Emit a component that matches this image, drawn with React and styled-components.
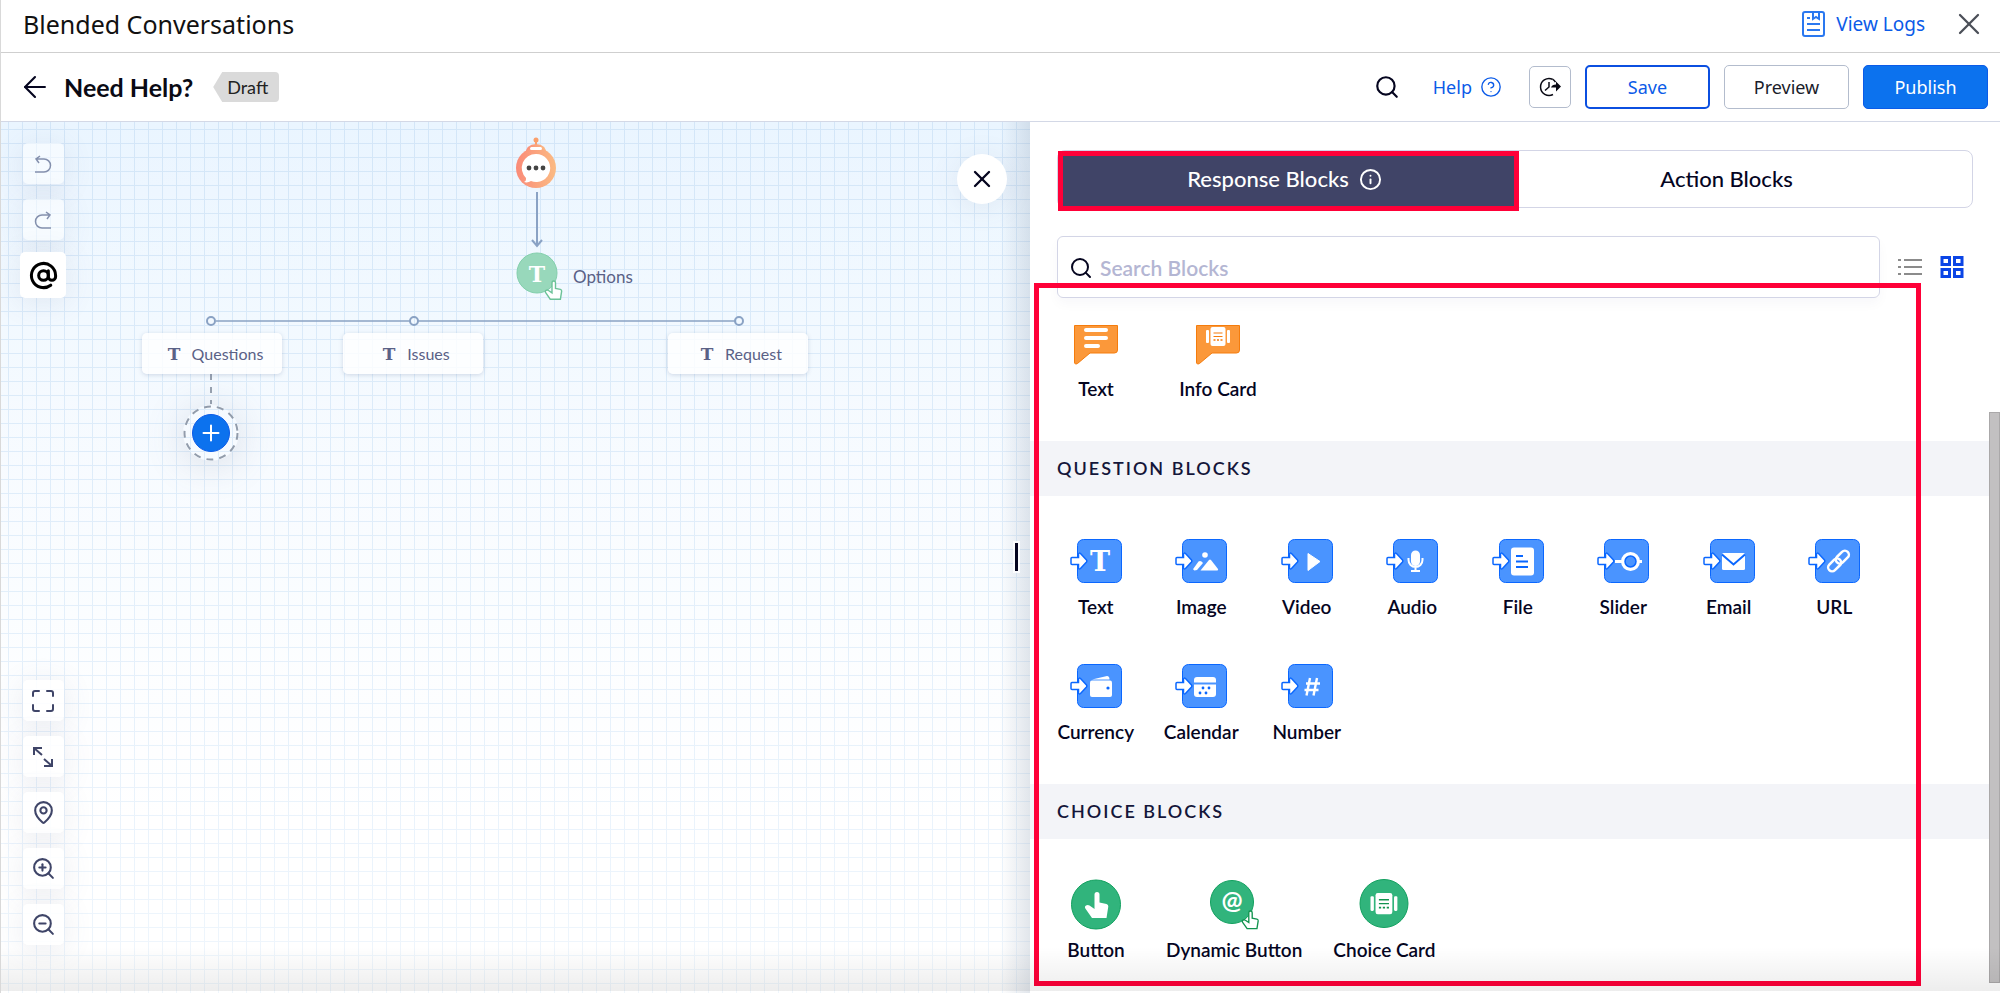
import React, { useState } from "react";
import styled, { createGlobalStyle, css } from "styled-components";
import {
  ArrowLeft,
  AtSign,
  CircleHelp,
  Info,
  MapPin,
  Search,
  X,
  ZoomIn,
  ZoomOut,
} from "lucide-react";

const GlobalStyle = createGlobalStyle`
  * {
    box-sizing: border-box;
  }
  body {
    margin: 0;
    background: #fff;
    color: #05051f;
    font-family: Lato, "Open Sans", sans-serif;
  }
  button, input {
    font-family: inherit;
    color: inherit;
  }
  svg {
    display: block;
    flex-shrink: 0;
    overflow: visible;
  }
`;

const Page = styled.div`
  position: relative;
  display: flex;
  flex-direction: column;
  height: 100vh;
  overflow: hidden;
  border-left: 1px solid #d9d9d9;
`;

// soft shade at the bottom of the window
const BottomShade = styled.div`
  position: absolute;
  left: 0;
  right: 0;
  bottom: 2px;
  height: 44px;
  background: linear-gradient(rgba(0, 0, 0, 0), rgba(0, 0, 0, 0.07));
  pointer-events: none;
`;

const plainButton = css`
  display: flex;
  align-items: center;
  justify-content: center;
  padding: 0;
  border: none;
  background: none;
  cursor: pointer;
`;

const IconButton = styled.button`
  ${plainButton};
`;

/* ---------- headers ---------- */

const TopBar = styled.header`
  display: flex;
  align-items: center;
  justify-content: space-between;
  height: 53px;
  padding: 0 13px 4px 22px;
  border-bottom: 1px solid #cfcfcf;
  font-family: "Noto Sans", sans-serif;
`;

const AppTitle = styled.h1`
  margin: 0;
  font-size: 25px;
  font-weight: 400;
  line-height: 32px;
  color: #111;
`;

const TopActions = styled.div`
  display: flex;
  align-items: center;
  gap: 26px;
  color: #4b4f58;
`;

const LogsLink = styled.a`
  display: flex;
  align-items: center;
  gap: 11px;
  color: #0b5be8;
  font-size: 19px;
  line-height: 24px;
  text-decoration: none;
`;

const FlowBar = styled.div`
  display: flex;
  align-items: center;
  justify-content: space-between;
  height: 69px;
  padding: 0 12px 0 17px;
  border-bottom: 1px solid #d3d8e6;
`;

const FlowName = styled.div`
  display: flex;
  align-items: center;
  gap: 12px;
`;

const FlowTitle = styled.h2`
  margin: 0;
  font-size: 25px;
  font-weight: 700;
  line-height: 32px;
  color: #0a0a14;
`;

const Badge = styled.span`
  margin-left: 8px;
  padding: 3px 11px 3px 14px;
  border-radius: 4px;
  background: #dadada;
  clip-path: polygon(0 50%, 9px 0, 100% 0, 100% 100%, 9px 100%);
  color: #222;
  font-size: 18px;
  line-height: 24px;
`;

const FlowActions = styled.div`
  display: flex;
  align-items: center;
  gap: 14px;
  font-family: "Noto Sans", sans-serif;
`;

const HelpLink = styled.a`
  display: flex;
  align-items: center;
  gap: 8px;
  margin: 0 13px 0 19px;
  color: #0b5be8;
  font-size: 18px;
  line-height: 24px;
  text-decoration: none;
`;

const variants = {
  outline: css`
    border: 2px solid #0b4fe0;
    color: #0b5be8;
  `,
  neutral: css`
    border: 1px solid #b3bccd;
    color: #1a1d2b;
  `,
  primary: css`
    border: 1px solid #0b5be8;
    background: #0c72ee;
    color: #fff;
  `,
};

const Button = styled.button`
  ${plainButton};
  width: ${({ $square }) => ($square ? "42px" : "125px")};
  height: ${({ $square }) => ($square ? "42px" : "44px")};
  border-radius: 5px;
  font-size: 18px;
  line-height: 24px;
  ${({ $variant }) => variants[$variant]};
`;

/* ---------- canvas ---------- */

const Body = styled.main`
  display: grid;
  grid-template-columns: 1029fr 970fr;
  grid-template-rows: minmax(0, 1fr);
  flex: 1;
  min-height: 0;
`;

const Canvas = styled.section`
  position: relative;
  overflow: hidden;
  background-color: #fff;
  background-image: linear-gradient(
      to left,
      rgba(120, 140, 165, 0.22),
      rgba(120, 140, 165, 0) 30px
    ),
    linear-gradient(rgba(255, 255, 255, 0), rgba(255, 255, 255, 0.65)),
    linear-gradient(to right, #d3e6f8 1px, transparent 1px),
    linear-gradient(#d3e6f8 1px, transparent 1px),
    linear-gradient(#eaf5ff, #fff 80%);
  background-size: auto, auto, 14px 14px, 14px 14px, auto;
  background-position: 0 0, 0 0, 7px 0, 0 7px, 0 0;
`;

const Toolbar = styled.div`
  display: flex;
  flex-direction: column;
  justify-content: space-between;
  width: 84px;
  height: 100%;
  padding: 21px 0 48px;
`;

const ToolGroup = styled.div`
  display: flex;
  flex-direction: column;
  align-items: center;
  gap: 15px;
`;

const Tool = styled.button`
  ${plainButton};
  width: 41px;
  height: 41px;
  border-radius: 5px;
  background: rgba(255, 255, 255, 0.85);
  box-shadow: 0 4px 30px rgba(90, 100, 130, 0.12);
  color: #3f4568;
  &:disabled {
    background: rgba(255, 255, 255, 0.5);
    color: #8490ad;
  }
  ${({ $active }) =>
    $active &&
    css`
      width: 46px;
      height: 46px;
      margin: -3px 0;
      background: #fff;
      color: #000;
    `}
`;

const Node = styled.div`
  position: absolute;
  left: ${({ $x }) => $x}px;
  top: ${({ $y }) => $y}px;
  display: flex;
  align-items: center;
  gap: 15px;
  color: #5a6186;
  font-size: 17px;
  line-height: 24px;
`;

const NodeLabel = styled.span`
  padding-top: 8px;
`;

const OptionNode = styled(Node)`
  justify-content: center;
  gap: 12px;
  width: 140px;
  height: 41px;
  padding-left: 6px;
  border-radius: 5px;
  background: rgba(255, 255, 255, 0.8);
  box-shadow: 0 1px 4px rgba(90, 110, 150, 0.25);
  font-size: 16px;
`;

const AddButton = styled(Node).attrs({ as: "button" })`
  ${plainButton};
  border-radius: 50%;
  box-shadow: 0 4px 40px rgba(90, 100, 130, 0.2);
`;

const CloseCanvas = styled.button`
  ${plainButton};
  position: absolute;
  top: 32px;
  right: 23px;
  width: 50px;
  height: 50px;
  border-radius: 50%;
  background: #fff;
  color: #05051f;
  box-shadow: 0 4px 30px rgba(90, 100, 130, 0.1);
`;

const DragHandle = styled.span`
  position: absolute;
  top: 421px;
  right: 12px;
  width: 3px;
  height: 28px;
  background: #05051f;
  box-shadow: 0 0 0 2px rgba(255, 255, 255, 0.8);
`;

/* ---------- blocks panel ---------- */

const Panel = styled.aside`
  position: relative;
  display: grid;
  grid-template-columns: 1fr 11px;
  grid-template-rows: minmax(0, 1fr);
  overflow: hidden;
  background: #fff;
`;

const PanelContent = styled.div`
  min-width: 0;
  padding-top: 28px;
`;

const ScrollTrack = styled.div`
  padding: 290px 0 10px;
`;

const ScrollThumb = styled.div`
  height: 100%;
  border: 1px solid #aaa8a9;
  background: #c2c0c1;
`;

const Tabs = styled.div`
  display: grid;
  grid-template-columns: 1fr 1fr;
  height: 58px;
  margin: 0 16px 0 27px;
  border: 1px solid #d3d5e6;
  border-radius: 8px;
`;

const Tab = styled.button`
  ${plainButton};
  position: relative;
  gap: 10px;
  padding-right: 34px;
  font-size: 22px;
  font-weight: 500;
  line-height: 28px;
  ${({ $active }) =>
    $active &&
    css`
      padding-right: 4px;
      background: #404467;
      color: #fff;
      &::after {
        content: "";
        position: absolute;
        inset: 0 -4px -4px 0;
        border: 5px solid #ff0038;
      }
    `}
`;

const SearchRow = styled.div`
  display: flex;
  align-items: center;
  gap: 18px;
  margin: 28px 25px 0 27px;
`;

const SearchField = styled.label`
  display: flex;
  flex: 1;
  align-items: center;
  gap: 7px;
  height: 62px;
  padding: 2px 14px 0 11px;
  border: 1px solid #d3d5e6;
  border-radius: 6px;
  box-shadow: 0 6px 12px rgba(40, 40, 80, 0.03);
`;

const SearchInput = styled.input`
  flex: 1;
  min-width: 0;
  padding: 0;
  border: none;
  outline: none;
  background: none;
  font-size: 21px;
  font-weight: 600;
  line-height: 24px;
  &::placeholder {
    color: #b4b6d3;
    opacity: 1;
  }
`;

const SectionTitle = styled.h3`
  margin: 0;
  padding: 0 27px;
  background: #f3f4f8;
  font-size: 18px;
  font-weight: 600;
  line-height: 55px;
  letter-spacing: 2px;
  color: #14163a;
`;

const BlockList = styled.div`
  display: flex;
  gap: ${({ $gap }) => $gap}px;
  padding: ${({ $top }) => $top}px 27px 40px;
`;

const BlockGrid = styled.div`
  display: grid;
  grid-template-columns: repeat(8, minmax(0, 1fr));
  row-gap: 45px;
  padding: 43px 102px 40px 13px;
`;

const BlockItem = styled.button`
  ${plainButton};
  flex-direction: column;
  gap: 12px;
  min-width: 78px;
  font-size: 19px;
  font-weight: 600;
  line-height: 24px;
  white-space: nowrap;
`;

const Highlight = styled.div`
  position: absolute;
  inset: 161px 79px 7px 4px;
  border: 5px solid #ff0038;
  pointer-events: none;
`;

/* ---------- drawings ---------- */

const blue = "#0a67ff";
const green = "#31b47c";

const handPath =
  "M10 15 V2.5 a2.5 2.5 0 0 1 5 0 V10.5 L22 12 q2 .6 1.8 2.6 L22 26 H7.5 L1.2 17 Q-.5 14.6 1.5 13.4 Q3.4 12.4 5 13.6 L10 17 Z";

const SlabT = ({ x = 0, y = 0, size, fill }) => (
  <text
    x={x}
    y={y}
    fontSize={size}
    fontWeight="700"
    fontFamily="'DejaVu Serif', serif"
    textAnchor="middle"
    fill={fill}
  >
    T
  </text>
);

const LogsIcon = () => (
  <svg width="23" height="26" fill="none" stroke="#2a78f0" strokeWidth="2">
    <rect x="1" y="1" width="21" height="24" rx="2" />
    <path d="M11 1v7l3-2 3 2V1M5 7h3M5 13h13M5 19h13" />
  </svg>
);

const ClockIcon = () => (
  <svg width="22" height="20" fill="none" stroke="#0a0a14" strokeWidth="1.5">
    <path d="M13.500 2.2A8.500 8.500 0 1 0 14 17.500" />
    <path d="M10 5v5l-4 3.500M13.500 2.200q2 1.200 3 3" />
    <path d="M12 10.500h5v4l5-5-5-5v3q-4 0-5 3z" fill="#0a0a14" stroke="none" />
  </svg>
);

const UndoIcon = ({ flip }) => (
  <svg
    width="18"
    height="18"
    viewBox="0 0 18 18"
    fill="none"
    stroke="currentColor"
    strokeWidth="1.5"
  >
    <g transform={flip ? "translate(18 0) scale(-1 1)" : undefined}>
      <path d="M1 17h9a6.5 6.5 0 0 0 0-13H2M6 1L2 4l3 4" />
    </g>
  </svg>
);

const FitIcon = () => (
  <svg
    width="22"
    height="22"
    fill="none"
    stroke="currentColor"
    strokeWidth="2"
    strokeLinecap="round"
  >
    <path d="M1 6V3a2 2 0 0 1 2-2h4M15 1h4a2 2 0 0 1 2 2v3M21 15v4a2 2 0 0 1-2 2h-4M7 21H3a2 2 0 0 1-2-2v-4" />
  </svg>
);

const ExpandIcon = () => (
  <svg width="20" height="20" fill="none" stroke="currentColor" strokeWidth="2">
    <path d="M1 8V1h8M1 1l8 7M11 12l8 7M19 12v7h-8" />
  </svg>
);

const ListIcon = () => (
  <svg width="24" height="18" stroke="#8b8b8b" strokeWidth="2">
    <path d="M0 2h3M6 2h18M0 9h3M6 9h18M0 16h3M6 16h18" />
  </svg>
);

const GridIcon = () => (
  <svg width="24" height="22" fill="none" stroke="#0b45e6" strokeWidth="3">
    <path d="M2 1.5h7.5v7H2zM14.5 1.5H22v7h-7.5zM2 13.5h7.5v7H2zM14.5 13.5H22v7h-7.5z" />
  </svg>
);

const BotIcon = () => (
  <svg width="40" height="51" viewBox="0 0 40 51">
    <defs>
      <linearGradient id="bot" x1="0" x2="1">
        <stop offset="0" stopColor="#fa8a78" />
        <stop offset="1" stopColor="#fbbb83" />
      </linearGradient>
    </defs>
    <circle cx="20" cy="3" r="2.5" fill="#fa9f6b" />
    <path d="M20 3v8" stroke="#fa9f6b" strokeWidth="2" />
    <path d="M9 18q1-11 11-11t11 11z" fill="url(#bot)" />
    <circle cx="20" cy="31" r="20" fill="url(#bot)" />
    <rect x="14" y="10" width="12" height="3" rx="1.5" fill="#fff" />
    <path
      d="M20 17a14 14 0 1 1-5 27c-2 1-4 2-7 1 2-1 2-2 2-4A14 14 0 0 1 20 17z"
      fill="#fff"
    />
    <g fill="#444">
      <circle cx="13" cy="31" r="2.4" />
      <circle cx="20" cy="31" r="2.4" />
      <circle cx="27" cy="31" r="2.4" />
    </g>
  </svg>
);

const OptionsIcon = () => (
  <svg width="42" height="42" viewBox="0 0 42 42">
    <circle cx="21" cy="21" r="20" fill="#98d8bb" stroke="#83cfac" />
    <SlabT x={21} y={30} size={22} fill="#fff" />
    <path
      d={handPath}
      transform="translate(29 29) scale(.7)"
      fill="#fff"
      stroke="#6cc298"
      strokeWidth="2"
    />
  </svg>
);

// connectors between the flow nodes
const Connectors = () => (
  <svg width="560" height="240" fill="none" stroke="#8aa2c4" strokeWidth="2">
    <path d="M337 2v54M332 50l5 6 5-6" />
    <path d="M16 131h194M218 131h318" strokeWidth="1.5" />
    <circle cx="11" cy="131" r="4" />
    <circle cx="214" cy="131" r="4" />
    <circle cx="539" cy="131" r="4" />
    <path d="M11 184v30" stroke="#98a2b0" strokeDasharray="6 7" />
  </svg>
);

const PlusIcon = () => (
  <svg width="56" height="56" fill="none">
    <circle
      cx="28"
      cy="28"
      r="26.5"
      stroke="#929cab"
      strokeWidth="2"
      strokeDasharray="7 6"
    />
    <circle cx="28" cy="28" r="18.5" fill="#0c72ee" stroke="#0b5be8" />
    <path
      d="M20.500 28h15M28 20.500v15"
      stroke="#fff"
      strokeWidth="2"
      strokeLinecap="round"
    />
  </svg>
);

// card glyph with a side strip on each edge
const CardGlyph = ({ color }) => (
  <g fill="#fff">
    <rect x="0" y="3" width="3" height="13" rx="1" />
    <rect x="4.500" y="0" width="15" height="19" rx="2" />
    <rect x="21" y="3" width="3" height="13" rx="1" />
    <path
      d="M7.500 6h9M7.500 9.500h9"
      stroke={color}
      strokeWidth="1.2"
      fill="none"
    />
    <path
      d="M7.500 13h9"
      stroke={color}
      strokeWidth="1.6"
      strokeDasharray="2 1.500"
      fill="none"
    />
  </g>
);

const Bubble = ({ children }) => (
  <svg width="44" height="44" viewBox="0 0 44 44">
    <path
      d="M.5 4.500h43V29q0 3-3 3H16L3.500 42.500Q.5 44 .5 41z"
      fill="#fb983a"
      stroke="#f57c0c"
    />
    {children}
  </svg>
);

const glyphs = {
  text: <SlabT x={30} y={32} size={27} fill="#fff" />,
  image: (
    <g fill="#fff">
      <circle cx="30" cy="16" r="2.800" />
      <path d="M25.500 31.500h17q1.200-.6.3-1.800L36 21q-1-1-2 0z" />
      <path d="M19.500 31.500q-2-.5-1-2l5-7q1.500-1 3 0l1.500 1.500-6 7z" />
    </g>
  ),
  video: (
    <path
      d="M27 14.500l12 8-12 9z"
      fill="#fff"
      stroke="#fff"
      strokeLinejoin="round"
    />
  ),
  audio: (
    <g fill="none" stroke="#fff" strokeWidth="2">
      <rect x="26" y="12.500" width="7" height="13.500" rx="3.500" fill="#fff" />
      <path d="M22.500 19v2a7 7 0 0 0 14 0v-2M29.500 28v5M25 32h9" />
    </g>
  ),
  file: (
    <g>
      <rect x="19" y="8.500" width="23" height="28" rx="3" fill="#fff" />
      <path d="M24 17h7M24 22.500h12M24 28h12" stroke={blue} strokeWidth="2" />
    </g>
  ),
  slider: (
    <g fill="none" stroke="#fff" strokeWidth="3">
      <path d="M18 22.500h8M41 22.500h4" />
      <circle cx="33.500" cy="22.500" r="7.500" strokeWidth="4" />
      <circle
        cx="33.500"
        cy="22.500"
        r="5.500"
        stroke={blue}
        strokeWidth="1.500"
      />
    </g>
  ),
  email: (
    <g>
      <rect x="19" y="14" width="23" height="17" rx="1.500" fill="#fff" />
      <path
        d="M19 15.500l11.500 10 11.500-10"
        fill="none"
        stroke={blue}
        strokeWidth="2"
      />
    </g>
  ),
  url: (
    <g
      transform="translate(18.500 10)"
      fill="none"
      stroke="#fff"
      strokeWidth="2.500"
    >
      <g transform="rotate(-45 12 12)">
        <rect x="-1" y="8" width="15" height="8" rx="4" />
        <rect x="10" y="8" width="15" height="8" rx="4" />
      </g>
    </g>
  ),
  currency: (
    <g fill="#fff">
      <path d="M22 15.500L37 12q2.500 0 2.500 3.500z" />
      <rect x="20" y="16.500" width="22" height="16.500" rx="2" />
      <circle cx="38" cy="24" r="1.600" fill={blue} />
    </g>
  ),
  calendar: (
    <g fill="#fff">
      <path d="M19 18.500v-2.500q0-3 3-3h16q3 0 3 3v2.500z" />
      <path d="M19 20.500h22V30q0 3-3 3H22q-3 0-3-3z" />
      <g fill={blue}>
        <circle cx="28" cy="24" r="1.400" />
        <circle cx="34" cy="24" r="1.400" />
        <circle cx="25" cy="29" r="1.400" />
        <circle cx="31" cy="29" r="1.400" />
      </g>
    </g>
  ),
  number: (
    <path
      d="M29 14l-3.500 17.500M36 14l-3.500 17.500M25 19.500h14M23.500 26h14"
      stroke="#fff"
      strokeWidth="2.400"
    />
  ),
};

const QuestionIcon = ({ type }) => (
  <svg width="52" height="44" viewBox="0 0 52 44">
    <rect
      x="7.500"
      y=".5"
      width="44"
      height="43"
      rx="6"
      fill="#4a94ff"
      stroke={blue}
    />
    <path
      d="M2 18.500h6.500v-3.500q.5-1.500 2-.5l6 6.500q.8 1 0 2l-6 6.500q-1.500 1-2-.5v-3.500H2q-1 0-1-1v-5q0-1 1-1z"
      fill="#fff"
      stroke={blue}
      strokeWidth="1.500"
    />
    {glyphs[type]}
  </svg>
);

const ButtonIcon = () => (
  <svg width="44" height="44" viewBox="0 0 44 44">
    <circle cx="22" cy="22.500" r="24.500" fill={green} stroke="#12a05f" />
    <path d={handPath} transform="translate(10.500 10)" fill="#fff" />
  </svg>
);

const DynamicIcon = () => (
  <svg width="44" height="44" viewBox="0 0 44 44">
    <circle cx="20" cy="20" r="21.500" fill={green} stroke="#12a05f" />
    <text
      x="20"
      y="27"
      fontSize="25"
      fontWeight="700"
      textAnchor="middle"
      fill="#fff"
    >
      @
    </text>
    <path
      d={handPath}
      transform="translate(30 29) scale(.68)"
      fill="#fff"
      stroke="#12934f"
      strokeWidth="2"
    />
  </svg>
);

const ChoiceIcon = () => (
  <svg width="44" height="44" viewBox="0 0 44 44">
    <circle cx="22" cy="21.500" r="24" fill={green} stroke="#12a05f" />
    <g transform="translate(8.500 11) scale(1.120)">
      <CardGlyph color="#12934f" />
    </g>
  </svg>
);

/* ---------- data ---------- */

const options = [
  { label: "Questions", x: 141, y: 211 },
  { label: "Issues", x: 342, y: 211 },
  { label: "Request", x: 667, y: 211 },
];

const questionBlocks = [
  "Text",
  "Image",
  "Video",
  "Audio",
  "File",
  "Slider",
  "Email",
  "URL",
  "Currency",
  "Calendar",
  "Number",
];

function FlowCanvas() {
  return (
    <Canvas>
      <Toolbar>
        <ToolGroup>
          <Tool aria-label="Undo" disabled>
            <UndoIcon />
          </Tool>
          <Tool aria-label="Redo" disabled>
            <UndoIcon flip />
          </Tool>
          <Tool aria-label="Variables" $active>
            <AtSign size={29} strokeWidth={2.5} />
          </Tool>
        </ToolGroup>
        <ToolGroup>
          <Tool aria-label="Fit to screen">
            <FitIcon />
          </Tool>
          <Tool aria-label="Expand">
            <ExpandIcon />
          </Tool>
          <Tool aria-label="Locate">
            <MapPin size={25} />
          </Tool>
          <Tool aria-label="Zoom in">
            <ZoomIn size={25} />
          </Tool>
          <Tool aria-label="Zoom out">
            <ZoomOut size={25} />
          </Tool>
        </ToolGroup>
      </Toolbar>

      <Node $x={199} $y={68}>
        <Connectors />
      </Node>
      <Node $x={515} $y={15}>
        <BotIcon />
      </Node>
      <Node $x={515} $y={130}>
        <OptionsIcon />
        <NodeLabel>Options</NodeLabel>
      </Node>
      {options.map(({ label, x, y }) => (
        <OptionNode key={label} $x={x} $y={y}>
          <svg width="13" height="12">
            <SlabT x={7} y={12} size={17} fill="#5a6186" />
          </svg>
          {label}
        </OptionNode>
      ))}
      <AddButton $x={182} $y={283} aria-label="Add block">
        <PlusIcon />
      </AddButton>

      <CloseCanvas aria-label="Close panel">
        <X size={28} />
      </CloseCanvas>
      <DragHandle />
    </Canvas>
  );
}

function BlocksPanel() {
  const [tab, setTab] = useState("response");
  const [query, setQuery] = useState("");

  return (
    <Panel>
      <PanelContent>
        <Tabs>
          <Tab $active={tab === "response"} onClick={() => setTab("response")}>
            Response Blocks
            <Info size={23} />
          </Tab>
          <Tab $active={tab === "action"} onClick={() => setTab("action")}>
            Action Blocks
          </Tab>
        </Tabs>

        <SearchRow>
          <SearchField>
            <Search size={24} />
            <SearchInput
              placeholder="Search Blocks"
              aria-label="Search Blocks"
              value={query}
              onChange={(e) => setQuery(e.target.value)}
            />
          </SearchField>
          <IconButton aria-label="List view">
            <ListIcon />
          </IconButton>
          <IconButton aria-label="Grid view">
            <GridIcon />
          </IconButton>
        </SearchRow>

        <BlockList $gap={44} $top={23}>
          <BlockItem>
            <Bubble>
              <path
                d="M12 9h20M12 17h20M12 25h12"
                stroke="#fff"
                strokeWidth="4"
                strokeLinecap="round"
              />
            </Bubble>
            Text
          </BlockItem>
          <BlockItem>
            <Bubble>
              <g transform="translate(10 6)">
                <CardGlyph color="#f57c0c" />
              </g>
            </Bubble>
            Info Card
          </BlockItem>
        </BlockList>

        <SectionTitle>QUESTION BLOCKS</SectionTitle>
        <BlockGrid>
          {questionBlocks.map((name) => (
            <BlockItem key={name}>
              <QuestionIcon type={name.toLowerCase()} />
              {name}
            </BlockItem>
          ))}
        </BlockGrid>

        <SectionTitle>CHOICE BLOCKS</SectionTitle>
        <BlockList $gap={31} $top={43}>
          <BlockItem>
            <ButtonIcon />
            Button
          </BlockItem>
          <BlockItem>
            <DynamicIcon />
            Dynamic Button
          </BlockItem>
          <BlockItem>
            <ChoiceIcon />
            Choice Card
          </BlockItem>
        </BlockList>
      </PanelContent>
      <ScrollTrack>
        <ScrollThumb />
      </ScrollTrack>
      <Highlight />
    </Panel>
  );
}

function App() {
  return (
    <Page>
      <GlobalStyle />
      <TopBar>
        <AppTitle>Blended Conversations</AppTitle>
        <TopActions>
          <LogsLink href="#logs">
            <LogsIcon />
            View Logs
          </LogsLink>
          <IconButton aria-label="Close">
            <X size={36} strokeWidth={1.5} />
          </IconButton>
        </TopActions>
      </TopBar>
      <FlowBar>
        <FlowName>
          <IconButton aria-label="Back">
            <ArrowLeft size={34} strokeWidth={1.5} />
          </IconButton>
          <FlowTitle>Need Help?</FlowTitle>
          <Badge>Draft</Badge>
        </FlowName>
        <FlowActions>
          <IconButton aria-label="Search">
            <Search size={26} />
          </IconButton>
          <HelpLink href="#help">
            Help
            <CircleHelp size={22} strokeWidth={1.5} />
          </HelpLink>
          <Button $variant="neutral" $square aria-label="History">
            <ClockIcon />
          </Button>
          <Button $variant="outline">Save</Button>
          <Button $variant="neutral">Preview</Button>
          <Button $variant="primary">Publish</Button>
        </FlowActions>
      </FlowBar>
      <Body>
        <FlowCanvas />
        <BlocksPanel />
      </Body>
      <BottomShade />
    </Page>
  );
}

export default App;
